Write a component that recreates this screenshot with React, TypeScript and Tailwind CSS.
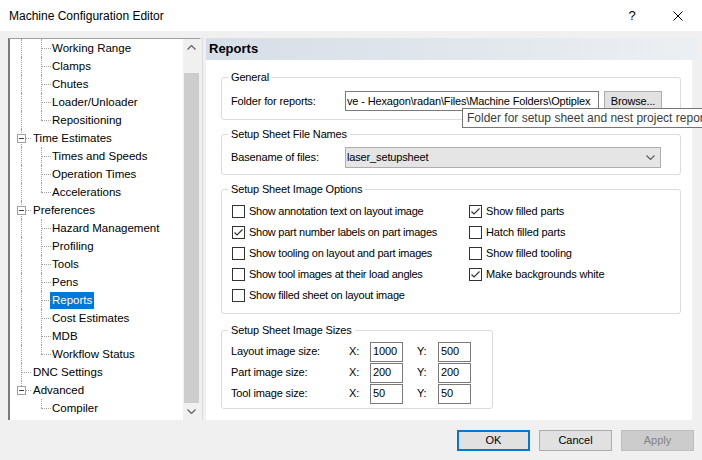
import React from 'react';

type Seg = 'pipe' | 'tee' | 'ell' | 'teeBox' | 'ellBox' | 'blank';

const treeRows: { label: string; segs: Seg[]; selected?: boolean }[] = [
  { label: 'Working Range', segs: ['pipe', 'tee'] },
  { label: 'Clamps', segs: ['pipe', 'tee'] },
  { label: 'Chutes', segs: ['pipe', 'tee'] },
  { label: 'Loader/Unloader', segs: ['pipe', 'tee'] },
  { label: 'Repositioning', segs: ['pipe', 'ell'] },
  { label: 'Time Estimates', segs: ['teeBox'] },
  { label: 'Times and Speeds', segs: ['pipe', 'tee'] },
  { label: 'Operation Times', segs: ['pipe', 'tee'] },
  { label: 'Accelerations', segs: ['pipe', 'ell'] },
  { label: 'Preferences', segs: ['teeBox'] },
  { label: 'Hazard Management', segs: ['pipe', 'tee'] },
  { label: 'Profiling', segs: ['pipe', 'tee'] },
  { label: 'Tools', segs: ['pipe', 'tee'] },
  { label: 'Pens', segs: ['pipe', 'tee'] },
  { label: 'Reports', segs: ['pipe', 'tee'], selected: true },
  { label: 'Cost Estimates', segs: ['pipe', 'tee'] },
  { label: 'MDB', segs: ['pipe', 'tee'] },
  { label: 'Workflow Status', segs: ['pipe', 'ell'] },
  { label: 'DNC Settings', segs: ['tee'] },
  { label: 'Advanced', segs: ['ellBox'] },
  { label: 'Compiler', segs: ['blank', 'ell'] },
];

const leftOptions = [
  { label: 'Show annotation text on layout image', checked: false },
  { label: 'Show part number labels on part images', checked: true },
  { label: 'Show tooling on layout and part images', checked: false },
  { label: 'Show tool images at their load angles', checked: false },
  { label: 'Show filled sheet on layout image', checked: false },
];

const rightOptions = [
  { label: 'Show filled parts', checked: true },
  { label: 'Hatch filled parts', checked: false },
  { label: 'Show filled tooling', checked: false },
  { label: 'Make backgrounds white', checked: true },
];

const sizes = [
  { label: 'Layout image size:', x: '1000', y: '500' },
  { label: 'Part image size:', x: '200', y: '200' },
  { label: 'Tool image size:', x: '50', y: '50' },
];

function TreeSeg({ kind }: { kind: Seg }) {
  const full = kind === 'pipe' || kind === 'tee' || kind === 'teeBox';
  const half = kind === 'ell' || kind === 'ellBox';
  const arm = kind !== 'pipe' && kind !== 'blank';
  const box = kind === 'teeBox' || kind === 'ellBox';
  return (
    <div className="relative w-[20px] h-full shrink-0">
      {full && <div className="absolute left-[10px] top-0 bottom-0 border-l border-dotted border-[#a0a0a0]" />}
      {half && <div className="absolute left-[10px] top-0 h-[9px] border-l border-dotted border-[#a0a0a0]" />}
      {arm && <div className="absolute left-[10px] right-0 top-[9px] border-t border-dotted border-[#a0a0a0]" />}
      {box && (
        <div className="absolute left-[6px] top-[5px] w-[9px] h-[9px] border border-[#a0a0a0] bg-white flex items-center justify-center">
          <div className="w-[5px] h-px bg-[#404040]" />
        </div>
      )}
    </div>
  );
}

function Chevron({ up }: { up?: boolean }) {
  return (
    <svg width="9" height="5" viewBox="0 0 9 5">
      <polyline
        points={up ? '0.5,4.5 4.5,0.5 8.5,4.5' : '0.5,0.5 4.5,4.5 8.5,0.5'}
        fill="none"
        stroke="#606060"
        strokeWidth="1.2"
      />
    </svg>
  );
}

function CheckBox({ checked }: { checked: boolean }) {
  return (
    <div className="w-[13px] h-[13px] border border-[#333333] bg-white shrink-0 flex items-center justify-center">
      {checked && (
        <svg width="11" height="11" viewBox="0 0 11 11">
          <polyline points="1.5,5.5 4,8 9.5,2.5" fill="none" stroke="#333333" strokeWidth="1.2" />
        </svg>
      )}
    </div>
  );
}

function Group({ title, className, children }: { title: string; className: string; children: React.ReactNode }) {
  return (
    <fieldset className={`border border-[#dcdcdc] rounded-[3px] px-[9px] ${className}`}>
      <legend className="-ml-[3px] px-[3px] leading-[15px]">{title}</legend>
      {children}
    </fieldset>
  );
}

export default function App() {
  return (
    <div className="relative w-[702px] h-[460px] overflow-hidden bg-[#f0f0f0] text-black font-['Liberation_Sans',Arial,sans-serif]">
      {/* title bar */}
      <div className="h-[31px] bg-white flex items-center">
        <span className="pl-[9px] text-[12px]">Machine Configuration Editor</span>
        <div className="ml-auto mr-px flex h-full">
          <div className="w-[46px] flex items-center justify-center text-[13px]">?</div>
          <div className="w-[46px] flex items-center justify-center">
            <svg width="10" height="10" viewBox="0 0 10 10">
              <path d="M0.5 0.5 L9.5 9.5 M9.5 0.5 L0.5 9.5" stroke="#000" strokeWidth="1" />
            </svg>
          </div>
        </div>
      </div>

      <div className="flex pt-[7px] h-[389px]">
        {/* tree */}
        <div className="ml-[8px] w-[193px] h-[382px] bg-white border-t border-t-[#a0a0a0] border-l-2 border-l-[#7a7a7a] border-r border-r-[#f0f0f0] flex">
          <div className="flex-1 pl-px overflow-hidden text-[11.5px]">
            {treeRows.map((r) => (
              <div key={r.label} className="flex h-[18px] items-center">
                {r.segs.map((s, i) => (
                  <TreeSeg key={i} kind={s} />
                ))}
                <span
                  className={`h-[17px] leading-[17px] px-[2px] whitespace-nowrap ${r.segs.length > 1 ? '-ml-px' : ''} ${
                    r.selected ? 'bg-[#0078d7] text-white' : ''
                  }`}
                >
                  {r.label}
                </span>
              </div>
            ))}
          </div>
          <div className="w-[17px] bg-[#f0f0f0] flex flex-col">
            <div className="h-[17px] flex items-center justify-center">
              <Chevron up />
            </div>
            <div className="h-[17px]" />
            <div className="flex-1 mx-px bg-[#cdcdcd]" />
            <div className="h-[17px] flex items-center justify-center">
              <Chevron />
            </div>
          </div>
        </div>

        {/* page */}
        <div className="ml-px border-l border-[#dcdcdc] pl-[3px] flex flex-col">
          <div className="w-[491px] h-[22px] bg-linear-to-r from-[#d6dee7] to-[#eceff2] flex items-center pl-[3px] text-[13px] font-bold">
            Reports
          </div>
          <div className="w-[486px] h-[360px] bg-white pl-[15px] pt-[10px] flex flex-col text-[11px] tracking-[-0.15px]">
            <Group title="General" className="w-[460px] pt-[6px] pb-[8px]">
              <div className="flex items-center h-[20px]">
                <span className="w-[114px]">Folder for reports:</span>
                <div className="w-[254px] h-[20px] border border-[#7a7a7a] flex items-center pl-px overflow-hidden whitespace-nowrap">
                  ve - Hexagon\radan\Files\Machine Folders\Optiplex
                </div>
                <div className="ml-[5px] w-[58px] h-[20px] bg-[#e1e1e1] border border-[#adadad] flex items-center justify-center">
                  Browse...
                </div>
              </div>
            </Group>

            <Group title="Setup Sheet File Names" className="mt-[7px] w-[460px] pt-[5px] pb-[6px]">
              <div className="flex items-center h-[21px]">
                <span className="w-[114px]">Basename of files:</span>
                <div className="w-[316px] h-[21px] bg-[#e5e5e5] border border-[#adadad] flex items-center justify-between pl-px pr-[5px]">
                  <span>laser_setupsheet</span>
                  <Chevron />
                </div>
              </div>
            </Group>

            <Group title="Setup Sheet Image Options" className="mt-[7px] w-[460px] pt-[4px] pb-[7px]">
              <div className="flex pl-px">
                <div className="w-[237px] flex flex-col tracking-[-0.25px]">
                  {leftOptions.map((o) => (
                    <div key={o.label} className="h-[21px] flex items-center gap-[4px]">
                      <CheckBox checked={o.checked} />
                      <span className="whitespace-nowrap">{o.label}</span>
                    </div>
                  ))}
                </div>
                <div className="flex flex-col">
                  {rightOptions.map((o) => (
                    <div key={o.label} className="h-[21px] flex items-center gap-[4px]">
                      <CheckBox checked={o.checked} />
                      <span className="whitespace-nowrap">{o.label}</span>
                    </div>
                  ))}
                </div>
              </div>
            </Group>

            <Group title="Setup Sheet Image Sizes" className="mt-[9px] w-[272px] pt-[3px] pb-[4px]">
              {sizes.map((s) => (
                <div key={s.label} className="h-[21px] flex items-center">
                  <span className="w-[118px]">{s.label}</span>
                  <span className="w-[21px]">X:</span>
                  <div className="w-[33px] h-[20px] border border-[#7a7a7a] flex items-center pl-[2px]">{s.x}</div>
                  <span className="ml-[14px] w-[21px]">Y:</span>
                  <div className="w-[33px] h-[20px] border border-[#7a7a7a] flex items-center pl-[2px]">{s.y}</div>
                </div>
              ))}
            </Group>
          </div>
        </div>
      </div>

      {/* buttons */}
      <div className="flex justify-end gap-[9px] pr-[8px] pt-[10px] text-[11px]">
        <div className="w-[73px] h-[21px] bg-[#e1e1e1] border-2 border-[#0078d7] flex items-center justify-center">OK</div>
        <div className="w-[73px] h-[21px] bg-[#e1e1e1] border border-[#adadad] flex items-center justify-center">Cancel</div>
        <div className="w-[73px] h-[21px] bg-[#cccccc] border border-[#bfbfbf] text-[#838383] flex items-center justify-center">
          Apply
        </div>
      </div>

      {/* tooltip */}
      <div className="absolute left-[462px] top-[108px] w-[260px] h-[20px] bg-white border border-[#767676] flex items-center pl-[4px] text-[12px] text-[#3c3c3c] whitespace-nowrap">
        Folder for setup sheet and nest project report
      </div>
    </div>
  );
}
